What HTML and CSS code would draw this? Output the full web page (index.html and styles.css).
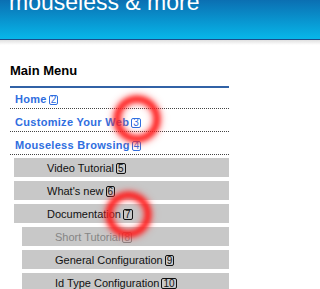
FILE: index.html
```html
<!DOCTYPE html>
<html>
<head>
<meta charset="utf-8">
<link rel="stylesheet" href="styles.css">
</head>
<body>
<header class="banner"><div class="banner-title">mouseless &amp; more</div></header>
<div class="banner-shadow"></div>
<nav class="menu">
  <h2 class="menu-title">Main Menu</h2>
  <ul class="main-list">
    <li class="main-item first">Home<span class="key">2</span></li>
    <li class="main-item">Customize Your Web<span class="key">3</span></li>
    <li class="main-item">Mouseless Browsing<span class="key">4</span></li>
  </ul>
  <ul class="sub-list">
    <li class="sub-item lvl1">Video Tutorial<span class="key">5</span></li>
    <li class="sub-item lvl1">What's new<span class="key">6</span></li>
    <li class="sub-item lvl1">Documentation<span class="key">7</span></li>
    <li class="sub-item lvl2 muted">Short Tutorial<span class="key">8</span></li>
    <li class="sub-item lvl2">General Configuration<span class="key">9</span></li>
    <li class="sub-item lvl2">Id Type Configuration<span class="key">10</span></li>
  </ul>
</nav>
<div class="ring ring-one"></div>
<div class="ring ring-two"></div>
</body>
</html>
```
FILE: styles.css
```css
html, body {
  margin: 0;
  padding: 0;
  background: #fff;
  font-family: "Liberation Sans", Arial, sans-serif;
  overflow: hidden;
}
.banner {
  height: 39px;
  overflow: hidden;
  background: linear-gradient(#0b6fb2, #07b7ea);
  border-bottom: 1px solid #1b4c8a;
}
.banner-title {
  color: #fff;
  font-size: 23px;
  line-height: 23px;
  margin-top: -9px;
  padding-left: 9px;
  white-space: nowrap;
}
.banner-shadow {
  height: 5px;
  background: linear-gradient(#e0e0e0, #fff);
}
.menu {
  margin-left: 10px;
  width: 219px;
}
.menu-title {
  margin: 18px 0 0;
  font-size: 13px;
  font-weight: bold;
  line-height: 16px;
  color: #000;
  padding-bottom: 7px;
  border-bottom: 2px solid #3162a6;
}
.main-list, .sub-list {
  list-style: none;
  margin: 0;
  padding: 0;
}
.main-item {
  padding: 6px 0 2px 5px;
  line-height: 14px;
  font-size: 11px;
  font-weight: bold;
  letter-spacing: 0.3px;
  color: #2f6ee0;
  border-bottom: 1px dotted #444;
  white-space: nowrap;
}
.main-item.first {
  padding-top: 4px;
}
.key {
  display: inline-block;
  font-size: 10px;
  font-weight: normal;
  letter-spacing: 0;
  line-height: 8px;
  padding: 0 1px;
  margin-left: 2px;
  border: 1px solid currentColor;
  border-radius: 2px;
}
.sub-list {
  margin-top: 3px;
}
.sub-item {
  height: 18px;
  padding-top: 1px;
  line-height: 18px;
  margin-bottom: 4px;
  background: #c8c8c8;
  padding-left: 33px;
  font-size: 11px;
  color: #111;
  white-space: nowrap;
}
.sub-item .key {
  line-height: 9px;
}
.sub-item.lvl1 {
  margin-left: 4px;
}
.sub-item.lvl2 {
  margin-left: 12px;
}
.sub-item.muted {
  color: #858585;
}
.ring {
  position: absolute;
  border: 6px solid #ff1a1a;
  border-radius: 50%;
  filter: blur(2.5px);
  box-shadow: 0 0 6px #ff4040, inset 0 0 6px #ff4040;
}
.ring-one {
  left: 114px;
  top: 96px;
  width: 34px;
  height: 34px;
}
.ring-two {
  left: 106px;
  top: 192px;
  width: 33px;
  height: 33px;
}
```
